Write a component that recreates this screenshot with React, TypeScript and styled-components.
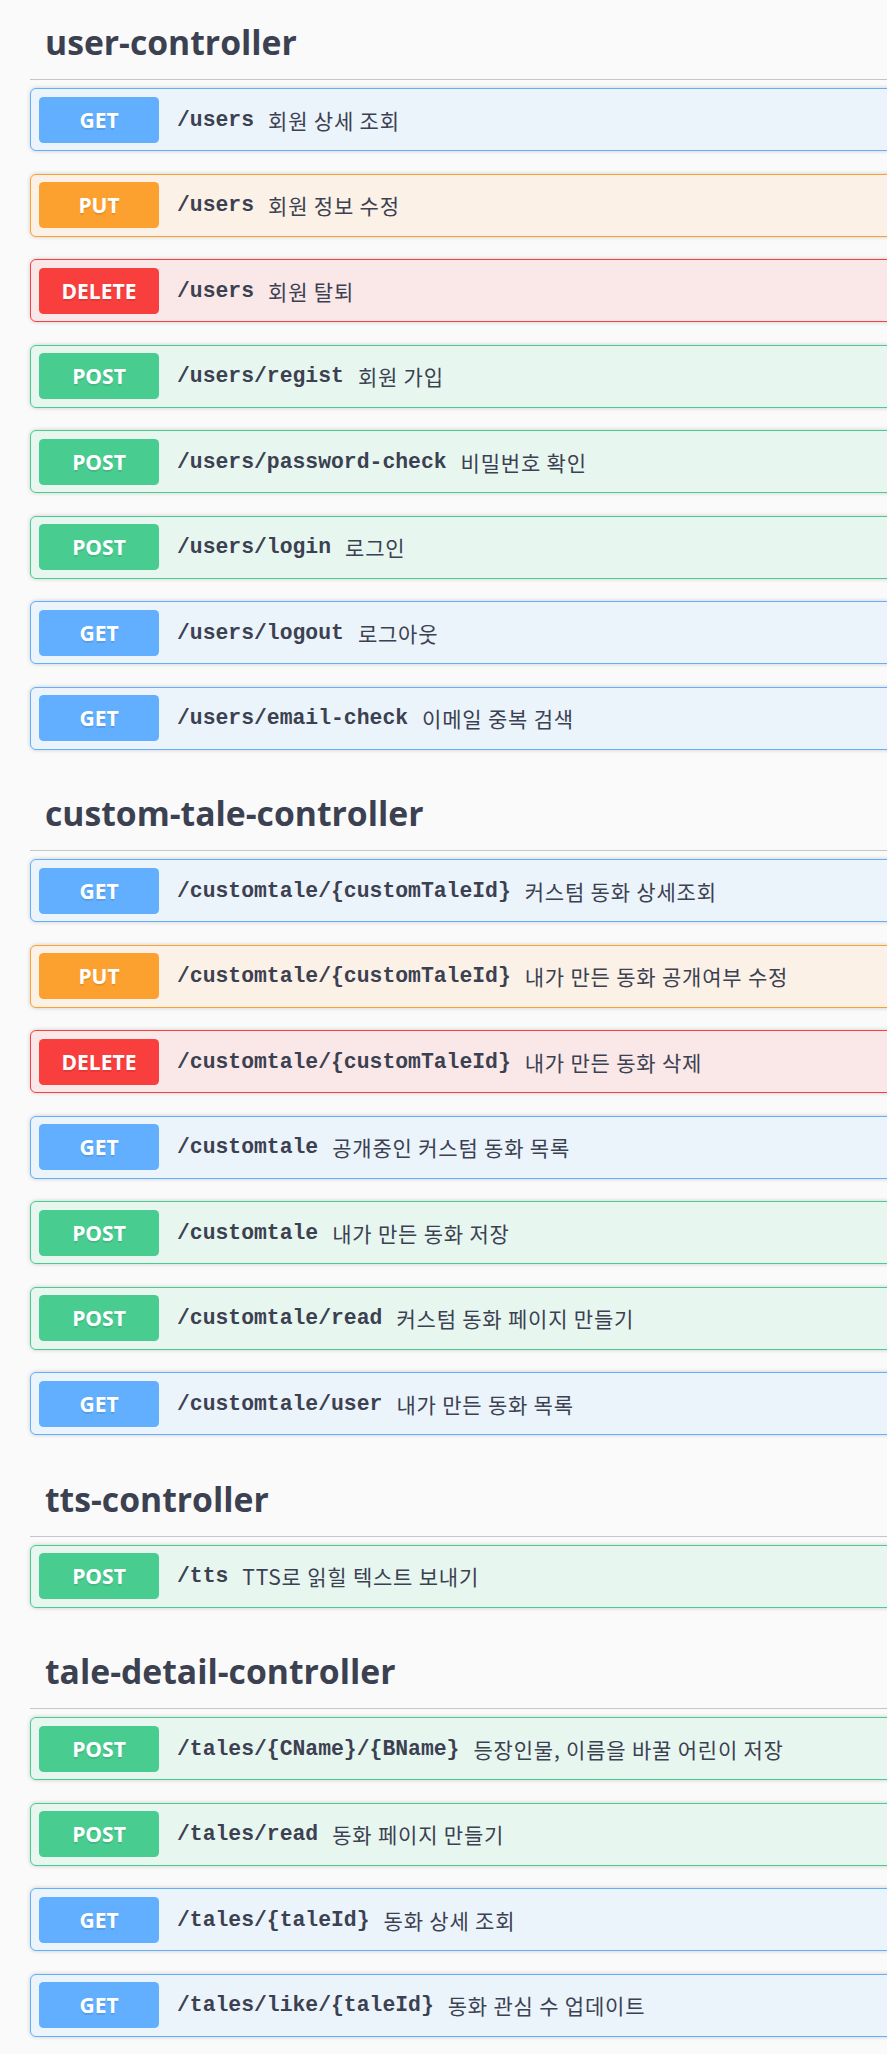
import React from "react";
import styled, { createGlobalStyle } from "styled-components";

type Method = "GET" | "PUT" | "DELETE" | "POST";

const palette: Record<Method, { main: string; bg: string }> = {
  GET: { main: "#61affe", bg: "#ebf3fb" },
  PUT: { main: "#fca130", bg: "#fbf1e6" },
  DELETE: { main: "#f93e3e", bg: "#fae7e7" },
  POST: { main: "#49cc90", bg: "#e8f6f0" },
};

const GlobalStyle = createGlobalStyle`
  html, body {
    margin: 0;
    padding: 0;
    background: #fafafa;
    overflow-x: hidden;
  }
  #root {
    overflow: hidden;
  }
`;

const Page = styled.div`
  background: #fafafa;
  padding: 1px 0 0 30px;
  width: 1100px;
  box-sizing: border-box;
  font-family: "Open Sans", "Noto Sans CJK KR", sans-serif;
  color: #3b4151;
`;

const Section = styled.section`
  display: flex;
  flex-direction: column;
`;

const TagHeading = styled.h3`
  margin: 0 0 8px;
  padding: 17px 30px 13px 15px;
  line-height: 48px;
  font-family: "Open Sans", "Noto Sans CJK KR", sans-serif;
  font-size: 33.7px;
  font-weight: 700;
  color: #3b4151;
  border-bottom: 1px solid #c4c6cb;
`;

const Block = styled.div<{ $method: Method }>`
  display: flex;
  align-items: center;
  height: 63px;
  box-sizing: border-box;
  margin: 0 0 22.5px;
  padding: 0 8px;
  border: 1px solid ${(p) => palette[p.$method].main};
  border-radius: 6px;
  background: ${(p) => palette[p.$method].bg};
  box-shadow: 0 0 4.5px rgba(0, 0, 0, 0.19);
`;

const Badge = styled.span<{ $method: Method }>`
  flex: none;
  display: flex;
  align-items: center;
  justify-content: center;
  width: 120px;
  height: 46px;
  border-radius: 4.5px;
  background: ${(p) => palette[p.$method].main};
  color: #fff;
  font-family: "Open Sans", sans-serif;
  font-size: 21px;
  font-weight: 700;
  text-shadow: 0 1.5px 0 rgba(0, 0, 0, 0.1);
`;

const Path = styled.span`
  margin-left: 18px;
  font-family: "Liberation Mono", "DejaVu Sans Mono", monospace;
  font-size: 21.4px;
  font-weight: 700;
  color: #3b4151;
  white-space: nowrap;
`;

const Desc = styled.span`
  margin-left: 14px;
  font-family: "Noto Sans CJK KR", "Noto Sans", sans-serif;
  font-size: 21px;
  letter-spacing: 0.8px;
  font-weight: 400;
  color: #3b4151;
  white-space: nowrap;
`;

type Op = { m: Method; path: string; desc: string };

const sections: { tag: string; ops: Op[] }[] = [
  {
    tag: "user-controller",
    ops: [
      { m: "GET", path: "/users", desc: "회원 상세 조회" },
      { m: "PUT", path: "/users", desc: "회원 정보 수정" },
      { m: "DELETE", path: "/users", desc: "회원 탈퇴" },
      { m: "POST", path: "/users/regist", desc: "회원 가입" },
      { m: "POST", path: "/users/password-check", desc: "비밀번호 확인" },
      { m: "POST", path: "/users/login", desc: "로그인" },
      { m: "GET", path: "/users/logout", desc: "로그아웃" },
      { m: "GET", path: "/users/email-check", desc: "이메일 중복 검색" },
    ],
  },
  {
    tag: "custom-tale-controller",
    ops: [
      { m: "GET", path: "/customtale/{customTaleId}", desc: "커스텀 동화 상세조회" },
      { m: "PUT", path: "/customtale/{customTaleId}", desc: "내가 만든 동화 공개여부 수정" },
      { m: "DELETE", path: "/customtale/{customTaleId}", desc: "내가 만든 동화 삭제" },
      { m: "GET", path: "/customtale", desc: "공개중인 커스텀 동화 목록" },
      { m: "POST", path: "/customtale", desc: "내가 만든 동화 저장" },
      { m: "POST", path: "/customtale/read", desc: "커스텀 동화 페이지 만들기" },
      { m: "GET", path: "/customtale/user", desc: "내가 만든 동화 목록" },
    ],
  },
  {
    tag: "tts-controller",
    ops: [{ m: "POST", path: "/tts", desc: "TTS로 읽힐 텍스트 보내기" }],
  },
  {
    tag: "tale-detail-controller",
    ops: [
      { m: "POST", path: "/tales/{CName}/{BName}", desc: "등장인물, 이름을 바꿀 어린이 저장" },
      { m: "POST", path: "/tales/read", desc: "동화 페이지 만들기" },
      { m: "GET", path: "/tales/{taleId}", desc: "동화 상세 조회" },
      { m: "GET", path: "/tales/like/{taleId}", desc: "동화 관심 수 업데이트" },
    ],
  },
];

export default function App() {
  return (
    <>
      <GlobalStyle />
      <Page>
        {sections.map((s) => (
          <Section key={s.tag}>
            <TagHeading>{s.tag}</TagHeading>
            {s.ops.map((o, i) => (
              <Block key={i} $method={o.m}>
                <Badge $method={o.m}>{o.m}</Badge>
                <Path>{o.path}</Path>
                <Desc>{o.desc}</Desc>
              </Block>
            ))}
          </Section>
        ))}
      </Page>
    </>
  );
}
